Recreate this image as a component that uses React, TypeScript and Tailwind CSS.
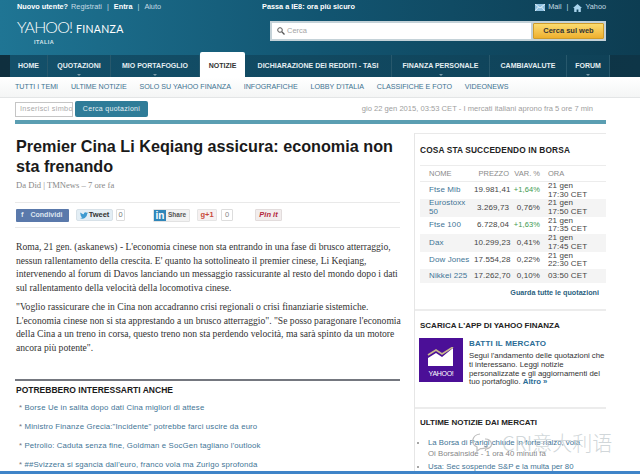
import React from "react";

const sans = "font-['Liberation_Sans',Arial,sans-serif]";
const serif = "font-['Liberation_Serif','DejaVu_Serif',serif]";

const rows = [
  { n: "Ftse Mib", p: "19.981,41", v: "+1,64%", g: true, o: ["21 gen", "17:30 CET"] },
  { n: "Eurostoxx 50", p: "3.269,73", v: "0,76%", g: false, o: ["21 gen", "17:50 CET"] },
  { n: "Ftse 100", p: "6.728,04", v: "+1,63%", g: true, o: ["21 gen", "17:35 CET"] },
  { n: "Dax", p: "10.299,23", v: "0,41%", g: false, o: ["21 gen", "17:45 CET"] },
  { n: "Dow Jones", p: "17.554,28", v: "0,22%", g: false, o: ["21 gen", "22:30 CET"] },
  { n: "Nikkei 225", p: "17.262,70", v: "0,10%", g: false, o: ["03:50 CET"] },
];

function NavItem({ t, w, caret, active }: { t: string; w: string; caret?: boolean; active?: boolean }) {
  return (
    <div
      className={`relative flex items-center justify-center shrink-0 whitespace-nowrap text-[7px] font-bold ${w} ${
        active ? "bg-white text-[#333] rounded-t-[2px] h-[25px] -mt-[3px] pt-[3px]" : "h-[22px] text-[#e4eef2] border-r border-[#27586c]"
      }`}
    >
      {t}
      {caret && <span className="absolute bottom-[1px] left-1/2 -ml-[2px] w-0 h-0 border-x-[2px] border-x-transparent border-t-[2px] border-t-[#7b9aa8]" />}
    </div>
  );
}

export default function App() {
  return (
    <div className={`relative w-[640px] h-[474px] overflow-hidden bg-white ${sans}`}>
      {/* header */}
      <div className="h-[77px] bg-gradient-to-r from-[#1f7594] via-[#125571] to-[#0d3d52] flex flex-col">
        <div className="h-[15px] flex items-center pl-[17px] pr-[34px] text-[7.300px] text-[#c5dbe4]">
          <b className="text-white">Nuovo utente?</b>
          <span className="ml-[3px]">Registrati</span>
          <span className="mx-[5px]">|</span>
          <b className="text-white">Entra</b>
          <span className="mx-[5px]">|</span>
          <span>Aiuto</span>
          <b className="text-white ml-[101px]">Passa a IE8: ora più sicuro</b>
          <div className="ml-auto flex items-center">
            <svg width="10" height="7" viewBox="0 0 10 7"><rect width="10" height="7" fill="#8fc0e0" /><path d="M0 0l5 4 5-4M0 7l3.5-4M10 7L6.500 3" stroke="#fff" strokeWidth=".7" fill="none" /></svg>
            <span className="ml-[3px]">Mail</span>
            <span className="mx-[5px]">|</span>
            <svg width="9" height="8" viewBox="0 0 9 8"><path d="M4.500 0L9 4H7.800v4H5.400V5.500H3.600V8H1.200V4H0z" fill="#a9d3ec" /></svg>
            <span className="ml-[3px]">Yahoo</span>
          </div>
        </div>
        <div className="h-[39px] flex items-start pl-[17px] pr-[34px] relative">
          <div className="w-[108px] text-white mt-[3px] relative">
            <div className="flex items-baseline">
              <span className="text-[16px] font-['Lato',sans-serif] font-light tracking-[-0.9px] leading-[18px]">YAHOO!</span>
              <span className="text-[10.500px] font-['Lato',sans-serif] ml-[4px] tracking-[0.3px] leading-[18px]">FINANZA</span>
            </div>
            <div className="text-[5.5px] font-bold tracking-[0.5px] pl-[17px] leading-[6px] mt-[1px] text-[#d5e5ec]">ITALIA</div>
          </div>
          <div className="ml-auto mt-[6px] w-[336px] h-[20px] bg-[#c4d2d8] p-[2px] flex">
            <div className="flex-1 bg-white flex items-center pl-[5px] text-[7.500px] text-[#a5a5a5]">
              <svg width="8" height="8" viewBox="0 0 8 8" className="mr-[2px]"><circle cx="3" cy="3" r="2.300" fill="none" stroke="#555" strokeWidth="1" /><path d="M4.800 4.800L7.500 7.500" stroke="#555" strokeWidth="1.300" /></svg>
              Cerca
            </div>
            <div className="w-[71px] ml-[2px] rounded-[1px] bg-gradient-to-b from-[#fbdc6e] to-[#eeb02c] border border-[#cf9c2a] text-[7.500px] font-bold text-[#333] flex items-center justify-center">
              Cerca sul web
            </div>
          </div>
        </div>
        {/* nav */}
        <div className="h-[22px] mt-[1px] bg-gradient-to-r from-[#0f2f3e] to-[#0e3547]">
          <div className="ml-[10px] w-[600px] h-full flex bg-gradient-to-r from-[#13506a] to-[#0f4258]">
            <NavItem t="HOME" w="w-[38px]" />
            <NavItem t="QUOTAZIONI" w="w-[63px]" caret />
            <NavItem t="MIO PORTAFOGLIO" w="w-[89px]" caret />
            <NavItem t="NOTIZIE" w="w-[45px]" active />
            <NavItem t="DICHIARAZIONE DEI REDDITI - TASI" w="w-[147px]" />
            <NavItem t="FINANZA PERSONALE" w="w-[98px]" caret />
            <NavItem t="CAMBIAVALUTE" w="w-[77px]" />
            <NavItem t="FORUM" w="w-[43px]" caret />
          </div>
        </div>
      </div>
      {/* subnav */}
      <div className="h-[21px] bg-gradient-to-b from-white to-[#f4f5f5] border-b border-[#e3e5e6] flex items-center pl-[15px] gap-[12.800px] text-[7.150px] text-[#3d7291]">
        <span>TUTTI I TEMI</span>
        <span>ULTIME NOTIZIE</span>
        <span>SOLO SU YAHOO FINANZA</span>
        <span>INFOGRAFICHE</span>
        <span>LOBBY D'ITALIA</span>
        <span>CLASSIFICHE E FOTO</span>
        <span>VIDEONEWS</span>
      </div>
      {/* quote row */}
      <div className="h-[22px] pl-[15px] pr-[34px] flex items-center">
        <div className="w-[58px] h-[15px] border border-[#c5c5c5] text-[7.300px] text-[#aaa] pl-[4px] flex items-center overflow-hidden whitespace-nowrap tracking-[0.3px]">
          Inserisci simbo
        </div>
        <div className="ml-[2px] w-[73px] h-[16px] rounded-[2px] bg-[#2f7c98] text-[#e6f0f4] text-[7px] tracking-[0.3px] flex items-center justify-center">
          Cerca quotazioni
        </div>
        <div className="ml-auto mr-[13px] text-[7.600px] text-[#a0a0a0]">gio 22 gen 2015, 03:53 CET - I mercati italiani aprono fra 5 ore 7 min</div>
      </div>
      <div className="ml-[15px] w-[591px] h-[4px] bg-[#5b9eb2]" />

      <div className="flex pl-[15px] items-start">
        {/* left */}
        <div className="w-[385px] shrink-0">
          <h1 className="mt-[13px] pl-[1px] text-[16.200px] leading-[19.500px] font-bold text-[#1a1a1a]">
            Premier Cina Li Keqiang assicura: economia non<br />sta frenando
          </h1>
          <div className={`mt-[3px] pl-[1px] h-[13px] leading-[13px] text-[8.600px] text-[#888] ${serif}`}>Da Did | TMNews – 7 ore fa</div>
          <div className="mt-[10px] border-y border-[#e9e9e9] h-[26px] flex items-center text-[7.500px] pl-[1px]">
            <div className="w-[53px] h-[13px] rounded-[1px] bg-[#5a79ab] flex items-center pl-[5px] font-bold text-[#dfe6f0]">
              <span className="mr-[7px]">f</span><span className="text-[7px]">Condividi</span>
            </div>
            <div className="ml-[7px] w-[37px] h-[12px] rounded-[2px] bg-[#e3eef5] border border-[#d7e1e8] flex items-center justify-center font-bold text-[#333]">
              <svg width="8" height="7" viewBox="0 0 24 20" className="mr-[1px]"><path d="M24 2.400a10 10 0 0 1-2.800.8A5 5 0 0 0 23.300.500a10 10 0 0 1-3.100 1.200 4.900 4.900 0 0 0-8.400 4.500A14 14 0 0 1 1.700 1a4.900 4.900 0 0 0 1.500 6.600 5 5 0 0 1-2.200-.6c0 2.400 1.700 4.400 3.900 4.900a5 5 0 0 1-2.200.1 4.900 4.900 0 0 0 4.600 3.400A10 10 0 0 1 0 17.400 14 14 0 0 0 21.500 5.200 10 10 0 0 0 24 2.400z" fill="#3e9ad0" /></svg>
              Tweet
            </div>
            <div className="ml-[3px] w-[9px] h-[12px] border border-[#ddd] rounded-[1px] text-[#777] flex items-center justify-center">0</div>
            <div className="ml-[28px] w-[37px] h-[13px] bg-[#f2f2f2] border border-[#e2e2e2] rounded-[1px] flex items-center text-[#555] font-bold text-[6.500px]">
              <span className="w-[12px] h-full bg-[#2f86b9] text-white text-[10px] leading-[12px] text-center mr-[2px]">in</span>Share
            </div>
            <div className="ml-[7px] w-[20px] h-[12px] bg-[#f6f0f0] border border-[#e5e5e5] rounded-[1px] text-[#c8483a] font-bold flex items-center justify-center">g+1</div>
            <div className="ml-[4px] w-[12px] h-[12px] border border-[#ddd] rounded-[1px] text-[#888] flex items-center justify-center">0</div>
            <div className="ml-[22px] w-[27px] h-[12px] bg-[#f2eded] border border-[#e2dcdc] rounded-[1px] text-[#b3283c] font-bold italic flex items-center justify-center">Pin it</div>
          </div>
          <div className={`mt-[12px] pl-[1px] text-[9.600px] leading-[13.500px] text-[#333] whitespace-nowrap ${serif}`}>
            <p>
              Roma, 21 gen. (askanews) - L'economia cinese non sta entrando in una fase di brusco atterraggio,<br />
              nessun rallentamento della crescita. E' quanto ha sottolineato il premier cinese, Li Keqiang,<br />
              intervenendo al forum di Davos lanciando un messaggio rassicurante al resto del mondo dopo i dati<br />
              sul rallentamento della velocità della locomotiva cinese.
            </p>
            <p className="mt-[6px]">
              "Voglio rassicurare che in Cina non accadranno crisi regionali o crisi finanziarie sistemiche.<br />
              L'economia cinese non si sta apprestando a un brusco atterraggio". "Se posso paragonare l'economia<br />
              della Cina a un treno in corsa, questo treno non sta perdendo velocità, ma sarà spinto da un motore<br />
              ancora più potente".
            </p>
          </div>
          <div className="mt-[25px] h-[2px] bg-[#74777f]" />
          <h2 className="mt-[2px] pl-[1px] text-[8.500px] leading-[14px] font-bold text-[#1a1a1a]">POTREBBERO INTERESSARTI ANCHE</h2>
          <ul className="mt-[4px] pl-[4px] text-[7.800px] text-[#3f7596] tracking-[0.15px] flex flex-col gap-[6px] leading-[13px]">
            <li><span className="text-[#777]">* </span>Borse Ue in salita dopo dati Cina migliori di attese</li>
            <li><span className="text-[#777]">* </span>Ministro Finanze Grecia:"Incidente" potrebbe farci uscire da euro</li>
            <li><span className="text-[#777]">* </span>Petrolio: Caduta senza fine, Goldman e SocGen tagliano l'outlook</li>
            <li><span className="text-[#777]">* </span>##Svizzera si sgancia dall'euro, franco vola ma Zurigo sprofonda</li>
          </ul>
        </div>
        {/* right */}
        <div className="ml-[14px] w-[192px] shrink-0 border-l border-[#e6e6e6] mt-[9px]">
          <section className="border-t border-[#e9e9e9] h-[176px] pl-[5px] pt-[10px]">
            <h3 className="text-[8.300px] font-bold text-[#222] leading-[12px] tracking-[0.15px]">COSA STA SUCCEDENDO IN BORSA</h3>
            <div className="mt-[9px] border-t border-[#ececec]">
              <div className="flex h-[16px] items-center text-[7.500px] text-[#8a8a8a] border-b border-[#ececec]">
                <span className="w-[44px] pl-[9px] shrink-0">NOME</span>
                <span className="w-[45px] text-right shrink-0">PREZZO</span>
                <span className="w-[31px] text-right shrink-0">VAR. %</span>
                <span className="ml-[8px]">ORA</span>
              </div>
              {rows.map((r, i) => (
                <div key={r.n} className={`flex items-center text-[8px] tracking-[0.1px] leading-[8.700px] ${i === 5 ? "h-[14px]" : "h-[17.400px]"} ${i % 2 ? "bg-[#f4f4f4]" : ""}`}>
                  <span className={`w-[54px] pl-[9px] shrink-0 text-[#3f7596] ${i === 4 || i === 5 ? "whitespace-nowrap" : ""}`}>{r.n}</span>
                  <span className="w-[35px] text-right shrink-0 text-[#444] whitespace-nowrap">{r.p}</span>
                  <span className={`w-[31px] text-right shrink-0 ${r.g ? "text-[#3d9a4d] text-[7.500px]" : "text-[#444]"}`}>{r.v}</span>
                  <span className="ml-[8px] text-[#444] whitespace-nowrap">
                    {r.o.map((x) => <div key={x}>{x}</div>)}
                  </span>
                </div>
              ))}
              <div className="mt-[5px] text-right pr-[7px] text-[7.200px] font-bold text-[#2b5f80]">Guarda tutte le quotazioni</div>
            </div>
          </section>
          <section className="border-t-2 border-[#ececec] h-[98px] pl-[5px] pt-[9px]">
            <h3 className="text-[8px] font-bold text-[#222] leading-[12px]">SCARICA L'APP DI YAHOO FINANZA</h3>
            <div className="mt-[6px] flex">
              <div className="w-[44px] h-[44px] -ml-[1px] shrink-0 bg-[#4b0f97] flex flex-col items-center justify-end pb-[4px]">
                <svg width="28" height="20" viewBox="0 0 28 20"><path d="M1 11l8-5 6 4 11-9v18H1z" fill="#fff" /><path d="M1 8l8-5 6 4 11-7" stroke="#c9b98c" strokeWidth="1.600" fill="none" /></svg>
                <span className="text-[7px] text-white tracking-[-0.3px] mt-[3px] leading-[8px]">YAHOO!</span>
              </div>
              <div className="ml-[6px] w-[137px] pt-[1px]">
                <div className="text-[8px] font-bold text-[#2b6c96] leading-[10px] tracking-[0.2px]">BATTI IL MERCATO</div>
                <p className="mt-[3px] text-[7.800px] leading-[8.800px] text-[#333] whitespace-nowrap">
                  Segui l'andamento delle quotazioni che<br />ti interessano. Leggi notizie<br />personalizzate e gli aggiornamenti del<br />tuo portafoglio. <b className="text-[#2b6c96]">Altro »</b>
                </p>
              </div>
            </div>
          </section>
          <section className="border-t-2 border-[#ececec] pl-[5px] pt-[8px]">
            <h3 className="text-[8px] font-bold text-[#222] leading-[12px]">ULTIME NOTIZIE DAI MERCATI</h3>
            <ul className="mt-[9px] pl-[8px] text-[7.800px] leading-[10.500px] text-[#3f7596] list-disc marker:text-[#888]">
              <li className="whitespace-nowrap">La Borsa di Parigi chiude in forte rialzo, vola<br /><span className="text-[#888]">Oi Borsainside - 1 ora 40 minuti fa</span></li>
              <li className="mt-[3px] whitespace-nowrap">Usa: Sec sospende S&amp;P e la multa per 80</li>
            </ul>
          </section>
        </div>
      </div>
      {/* watermark */}
      <div className="absolute left-[470px] top-[431px] flex items-center pointer-events-none">
        <svg width="26" height="22" viewBox="0 0 26 22" fill="none" stroke="#bdbdbd" strokeWidth="1.200"><path d="M10 2a8.500 7 0 0 0-3 13v4l3.500-2.500a9 7 0 0 0 7.500-2" /><path d="M15 7a6 5 0 1 1 1 10l-1 2" /></svg>
        <span className="ml-[6px] text-[20px] leading-[24px] text-[#c5cdd0]/80 font-['Noto_Sans_CJK_SC','Liberation_Sans',sans-serif] font-light">CRI意大利语</span>
      </div>
      {/* taskbar edge */}
      <div className="absolute left-0 right-0 bottom-0 h-[3px] bg-[#3f84c8]" />
    </div>
  );
}
